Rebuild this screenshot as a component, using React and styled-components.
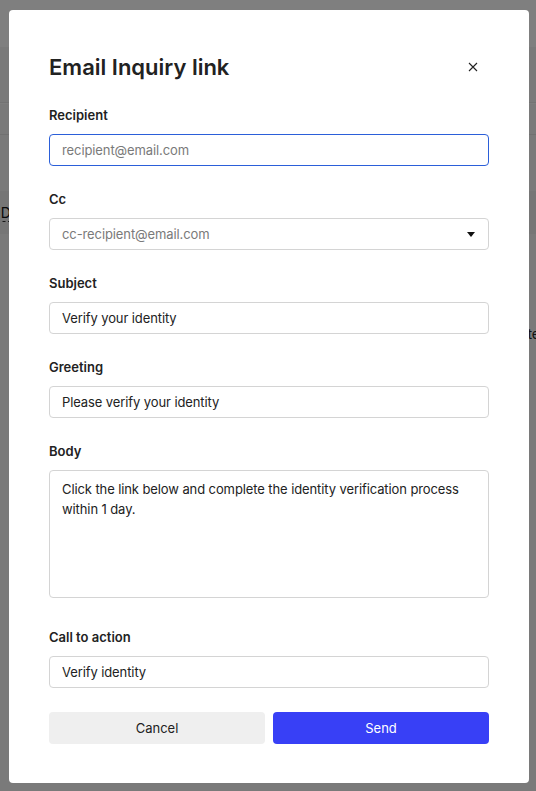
import styled, { createGlobalStyle } from 'styled-components'

const GlobalStyle = createGlobalStyle`
  * { box-sizing: border-box; }
  html, body { margin: 0; padding: 0; }
  body {
    font-family: Inter, "Noto Sans", "Liberation Sans", sans-serif;
    color: #222;
    background: #f4f4f4;
    overflow: hidden;
  }
`

// page behind the dialog
const Page = styled.div`
  height: 791px;
  background: #f4f4f4;
  display: flex;
  flex-direction: column;
`
const TopBar = styled.div`
  height: 47px;
  background: #ffffff;
`
const SubBar = styled.div`
  height: 56px;
  border-bottom: 1px solid #e6e6e6;
`
const SubBar2 = styled.div`
  height: 32px;
  border-top: 1px solid #fdfdfd;
  border-bottom: 1px solid #e2e2e2;
`
const TableHead = styled.div`
  margin-top: 56px;
  height: 43px;
  background: #ececec;
  display: flex;
  align-items: center;
  font-size: 14px;
  color: #111;
`
const HeadCell = styled.span`
  margin-left: -3px;
  border-bottom: 1px dashed #333;
`
const TableRow = styled.div`
  margin-top: 91px;
  display: flex;
  justify-content: flex-end;
  font-size: 14px;
  color: #222;
  margin-right: -4px;
`

const Backdrop = styled.div`
  position: fixed;
  inset: 0;
  background: rgba(0, 0, 0, 0.5);
`

const Modal = styled.div`
  position: fixed;
  left: 9px;
  top: 10px;
  width: 520px;
  height: 773px;
  background: #fff;
  border-radius: 4px;
  padding: 40px;
  display: flex;
  flex-direction: column;
  & > * { flex-shrink: 0; }
`
const Header = styled.div`
  display: flex;
  justify-content: space-between;
  align-items: center;
  height: 34px;
  margin-bottom: 23px;
`
const Title = styled.h2`
  margin: 0;
  font-size: 22px;
  font-weight: 600;
  color: #222;
`
const CloseButton = styled.button`
  border: none;
  background: none;
  padding: 0;
  width: 16px;
  height: 16px;
  margin-right: 8px;
  display: flex;
  align-items: center;
  justify-content: center;
  color: #222;
  cursor: pointer;
`
const Field = styled.div`
  display: flex;
  flex-direction: column;
  margin-bottom: ${(p) => p.$gap || 25}px;
`
const Label = styled.label`
  font-size: 13px;
  line-height: 16px;
  font-weight: 600;
  color: #222;
  margin-bottom: 11px;
`
const Input = styled.input`
  height: 32px;
  width: 100%;
  border: 1px solid ${(p) => (p.$focused ? '#2b5fd9' : '#d4d4d4')};
  border-radius: 4px;
  padding: 0 12px;
  font-family: inherit;
  font-size: 13px;
  letter-spacing: -0.1px;
  color: #222;
  outline: none;
  caret-color: #222;
  &::placeholder { color: #7a7a7a; }
`
const SelectBox = styled.div`
  height: 32px;
  border: 1px solid #d4d4d4;
  border-radius: 4px;
  padding: 0 12px;
  display: flex;
  align-items: center;
  justify-content: space-between;
  font-size: 13px;
  letter-spacing: -0.1px;
  color: #7a7a7a;
`
const Caret = styled.svg`
  width: 8px;
  height: 5px;
  margin-right: 1px;
`
const TextArea = styled.textarea`
  display: block;
  height: 128px;
  width: 100%;
  resize: none;
  border: 1px solid #d4d4d4;
  border-radius: 4px;
  padding: 8px 12px;
  font-family: inherit;
  font-size: 13px;
  letter-spacing: -0.1px;
  line-height: 20px;
  color: #222;
  outline: none;
`
const Actions = styled.div`
  display: grid;
  grid-template-columns: 1fr 1fr;
  gap: 8px;
`
const Button = styled.button`
  height: 32px;
  border: none;
  border-radius: 4px;
  font-family: inherit;
  font-size: 13px;
  cursor: pointer;
  background: ${(p) => (p.$primary ? '#3840f6' : '#efefef')};
  color: ${(p) => (p.$primary ? '#fff' : '#222')};
`

export default function App() {
  return (
    <>
      <GlobalStyle />
      <Page>
        <TopBar />
        <SubBar />
        <SubBar2 />
        <TableHead>
          <HeadCell>ID</HeadCell>
        </TableHead>
        <TableRow>Date</TableRow>
      </Page>
      <Backdrop />
      <Modal>
        <Header>
          <Title>Email Inquiry link</Title>
          <CloseButton aria-label="Close">
            <svg width="10" height="10" viewBox="0 0 10 10" fill="none" stroke="currentColor" strokeWidth="1.1">
              <path d="M1 1l8 8M9 1l-8 8" />
            </svg>
          </CloseButton>
        </Header>

        <Field>
          <Label>Recipient</Label>
          <Input $focused autoFocus placeholder="recipient@email.com" />
        </Field>

        <Field>
          <Label>Cc</Label>
          <SelectBox>
            cc-recipient@email.com
            <Caret viewBox="0 0 8 5">
              <path d="M0 0h8L4 5z" fill="#111" />
            </Caret>
          </SelectBox>
        </Field>

        <Field>
          <Label>Subject</Label>
          <Input defaultValue="Verify your identity" />
        </Field>

        <Field>
          <Label>Greeting</Label>
          <Input defaultValue="Please verify your identity" />
        </Field>

        <Field $gap={31}>
          <Label>Body</Label>
          <TextArea defaultValue="Click the link below and complete the identity verification process within 1 day." />
        </Field>

        <Field $gap={24}>
          <Label>Call to action</Label>
          <Input defaultValue="Verify identity" />
        </Field>

        <Actions>
          <Button>Cancel</Button>
          <Button $primary>Send</Button>
        </Actions>
      </Modal>
    </>
  )
}
